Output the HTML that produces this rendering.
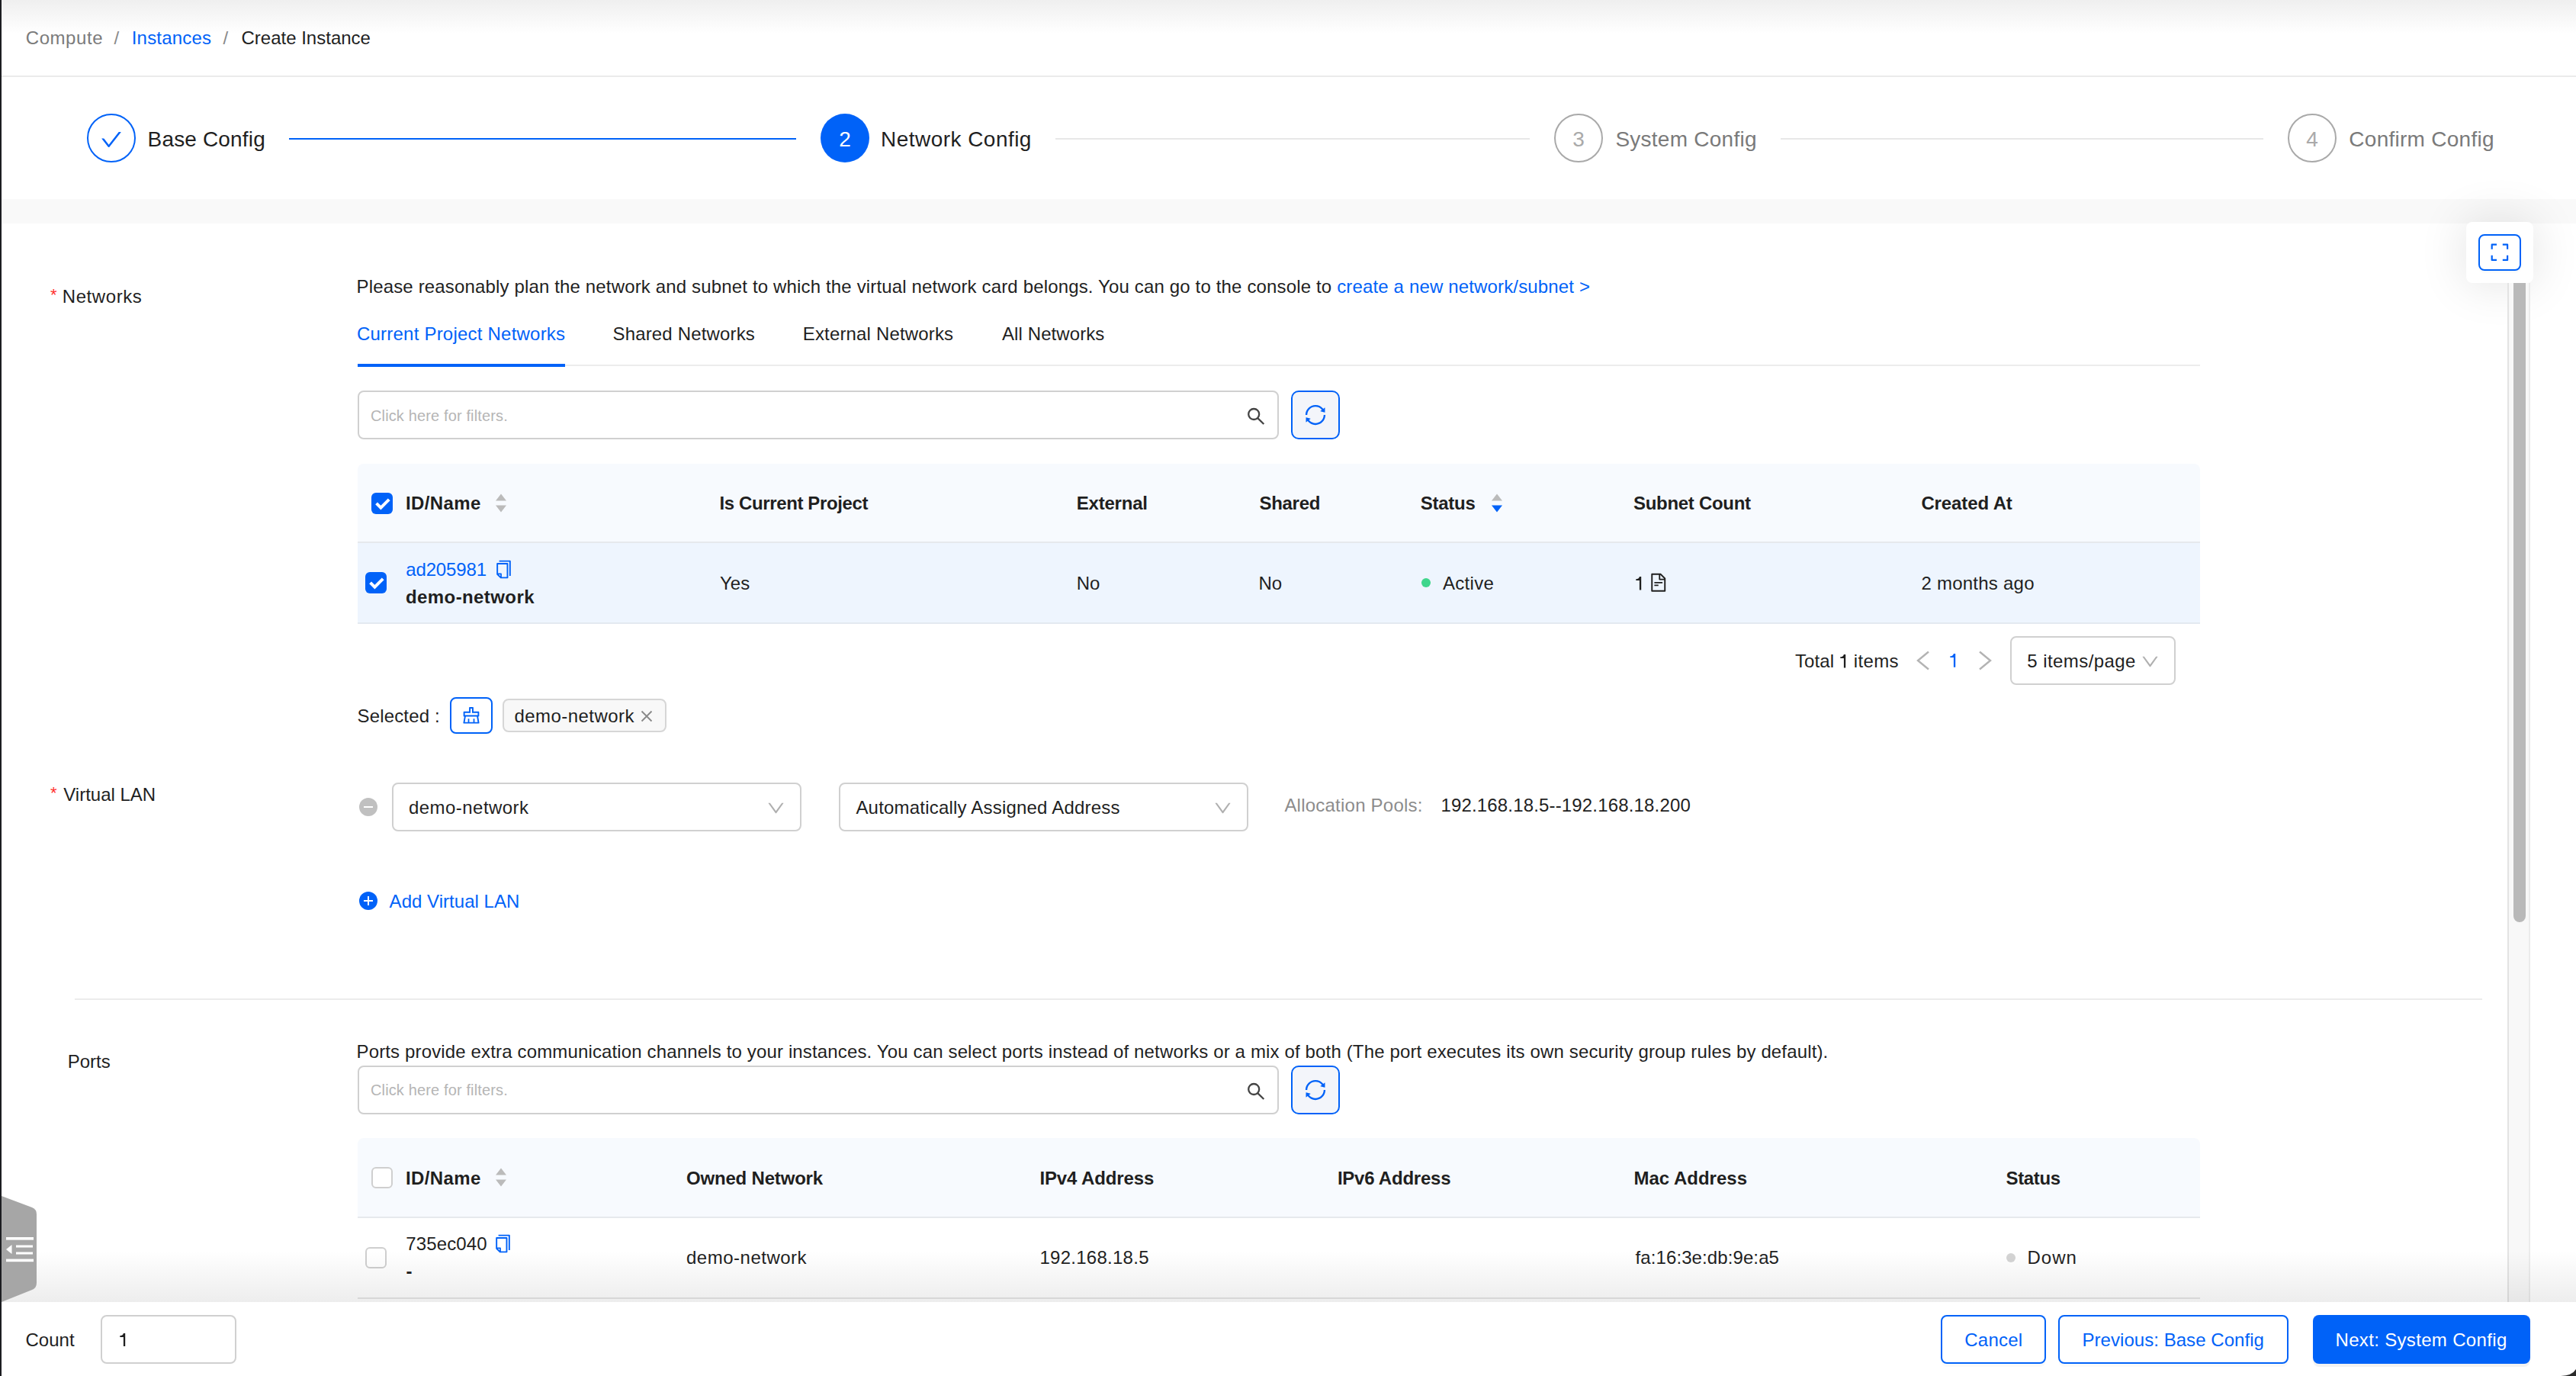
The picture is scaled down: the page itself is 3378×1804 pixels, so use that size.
<!DOCTYPE html>
<html><head><meta charset="utf-8">
<style>
html,body{margin:0;padding:0;width:3378px;height:1804px;overflow:hidden;background:#fff}
body{position:relative;font-family:"Liberation Sans",sans-serif;}
.t{position:absolute;line-height:1;white-space:nowrap;font-family:"Liberation Sans",sans-serif}
.a{position:absolute;box-sizing:border-box}
svg{position:absolute;overflow:visible}
</style></head><body>
<!-- top gradient -->
<div class="a" style="left:0;top:0;width:3378px;height:44px;background:linear-gradient(#efefef,#fff)"></div>
<!-- breadcrumb divider -->
<div class="a" style="left:0;top:99px;width:3378px;height:2px;background:#ebebeb"></div>
<!-- gray band -->
<div class="a" style="left:0;top:261px;width:3378px;height:32px;background:#f9f9f9"></div>

<!-- steps -->
<div class="a" style="left:114px;top:149px;width:64px;height:64px;border:2px solid #0062f8;border-radius:50%"></div>
<svg style="left:129.75px;top:167px" width="32" height="32" viewBox="0 0 1024 1024"><path fill="#0062f8" d="M912 190h-69.9c-9.8 0-19.1 4.5-25.1 12.2L404.7 724.5 207 474a32 32 0 00-25.1-12.2H112c-6.7 0-10.4 7.7-6.3 12.9l273.9 347c12.8 16.2 37.4 16.2 50.3 0l488.4-618.9c4.1-5.1.4-12.8-6.3-12.8z"/></svg>
<div class="a" style="left:379px;top:181px;width:665px;height:2px;background:#0062f8"></div>
<div class="a" style="left:1076px;top:149px;width:64px;height:64px;background:#0062f8;border-radius:50%;color:#fff;font-size:28px;line-height:68px;text-align:center">2</div>
<div class="a" style="left:1384px;top:181px;width:622px;height:2px;background:#e8e8e8"></div>
<div class="a" style="left:2038px;top:149px;width:64px;height:64px;border:2px solid #a9a9a9;border-radius:50%;color:#aaaaaa;font-size:28px;line-height:64px;text-align:center">3</div>
<div class="a" style="left:2335px;top:181px;width:633px;height:2px;background:#e8e8e8"></div>
<div class="a" style="left:3000px;top:149px;width:64px;height:64px;border:2px solid #a9a9a9;border-radius:50%;color:#aaaaaa;font-size:28px;line-height:64px;text-align:center">4</div>

<!-- fullscreen button -->
<div class="a" style="left:3234px;top:291px;width:88px;height:80px;background:#fff;border-radius:8px;box-shadow:0 0 64px rgba(0,0,0,0.12)"></div>
<div class="a" style="left:3250px;top:307px;width:56px;height:48px;border:2px solid #0062f8;border-radius:8px;box-shadow:0 3px 2px rgba(0,0,0,0.02)"></div>
<svg style="left:3266px;top:319px" width="24" height="24" viewBox="0 0 24 24"><path d="M1.7 7.8V1.7H8M15.8 1.7H22.1V7.8M22.1 15.8V21.9H15.8M8 21.9H1.7V15.8" fill="none" stroke="#0062f8" stroke-width="2.2" stroke-linecap="butt" stroke-linejoin="round"/></svg>

<!-- scrollbar -->
<div class="a" style="left:3288px;top:371px;width:30px;height:1336px;background:#f8f8f8;border-left:2px solid #e3e3e3;border-right:2px solid #ebebeb"></div>
<div class="a" style="left:3296px;top:371px;width:16px;height:838px;background:#b9b9b9;border-radius:0 0 8px 8px"></div>

<!-- required asterisks -->
<div class="t" style="left:66px;top:376px;font-size:22px;color:#ff2e2e">*</div>
<div class="t" style="left:66px;top:1029px;font-size:22px;color:#ff2e2e">*</div>

<!-- tabs -->
<div class="a" style="left:469px;top:478px;width:2416px;height:2px;background:#ececec"></div>
<div class="a" style="left:469px;top:477px;width:272px;height:4px;background:#0062f8"></div>

<!-- search 1 -->
<div class="a" style="left:469px;top:512px;width:1208px;height:64px;border:2px solid #d0d0d0;border-radius:8px;background:#fff"></div>
<svg style="left:1632px;top:531px" width="28" height="28" viewBox="0 0 28 28"><circle cx="12.2" cy="12" r="7" fill="none" stroke="#444" stroke-width="2.3"/><line x1="17.2" y1="17.2" x2="25.3" y2="25" stroke="#444" stroke-width="2.3"/></svg>
<div class="a" style="left:1693px;top:512px;width:64px;height:64px;border:2px solid #0062f8;border-radius:10px;background:#f3f5fa"></div>
<svg style="left:1708.6px;top:527.8px" width="32" height="32" viewBox="0 0 1024 1024"><path fill="#0062f8" d="M168 504.2c1-43.7 10-86.1 26.9-126 17.3-41 42.1-77.7 73.7-109.4S337 212.3 378 195c42.4-17.9 87.4-27 133.9-27s91.5 9.1 133.8 27A341.5 341.5 0 01755 268.8c9.900 9.9 19.2 20.4 27.8 31.4l-60.2 47a8 8 0 003 14.1l175.7 43c5 1.2 9.9-2.6 9.9-7.7l.8-180.9c0-6.7-7.7-10.5-12.9-6.3l-56.4 44.1C765.8 155.1 646.2 92 511.8 92 282.7 92 96.3 275.6 92 503.8a8 8 0 008 8.2h60c4.4 0 7.9-3.5 8-7.8zm756 7.8h-60c-4.4 0-7.9 3.5-8 7.8-1 43.7-10 86.1-26.9 126-17.3 41-42.1 77.8-73.7 109.4A342.45 342.45 0 01512.1 856a342.24 342.24 0 01-243.2-100.8c-9.9-9.9-19.2-20.4-27.8-31.4l60.2-47a8 8 0 00-3-14.1l-175.7-43c-5-1.2-9.9 2.6-9.9 7.7l-.7 181c0 6.7 7.7 10.5 12.9 6.3l56.4-44.1C258.2 868.9 377.8 932 512.2 932c229.2 0 415.5-183.7 419.8-411.8a8 8 0 00-8-8.2z"/></svg>

<!-- table 1 -->
<div class="a" style="left:469px;top:608px;width:2416px;height:102px;background:#f7fafe;border-radius:8px 8px 0 0"></div>
<div class="a" style="left:469px;top:710px;width:2416px;height:2px;background:#e6e9ed"></div>
<div class="a" style="left:469px;top:712px;width:2416px;height:104px;background:#eef5fe"></div>
<div class="a" style="left:469px;top:816px;width:2416px;height:2px;background:#e3e9f0"></div>
<!-- header checkbox -->
<div class="a" style="left:487px;top:646px;width:28px;height:28px;background:#0062f8;border-radius:6px"></div>
<svg style="left:487px;top:646px" width="28" height="28" viewBox="0 0 28 28"><polyline points="6.6,13.8 12.4,19.6 23.2,8.8" fill="none" stroke="#fff" stroke-width="4"/></svg>
<!-- sort icon -->
<svg style="left:649px;top:647px" width="16" height="25" viewBox="0 0 16 25"><path d="M8 0.5L15 9.5H1z M1 15.5H15L8 24.5z" fill="#bbbbbb"/></svg>
<svg style="left:1954.5px;top:647px" width="16" height="25" viewBox="0 0 16 25"><path d="M8 0.5L15 9.5H1z" fill="#bbbbbb"/><path d="M1 15.5H15L8 24.5z" fill="#0062f8"/></svg>
<!-- row checkbox -->
<div class="a" style="left:479px;top:750px;width:28px;height:28px;background:#0062f8;border-radius:6px"></div>
<svg style="left:479px;top:750px" width="28" height="28" viewBox="0 0 28 28"><polyline points="6.6,13.8 12.4,19.6 23.2,8.8" fill="none" stroke="#fff" stroke-width="4"/></svg>
<!-- copy icon -->
<svg style="left:646.8px;top:732.6px" width="27" height="27" viewBox="0 0 1024 1024"><path fill="#0062f8" d="M832 64H296c-4.4 0-8 3.600-8 8v56c0 4.4 3.6 8 8 8h496v688c0 4.4 3.6 8 8 8h56c4.4 0 8-3.6 8-8V96c0-17.7-14.3-32-32-32zM704 192H192c-17.7 0-32 14.3-32 32v530.7c0 8.5 3.4 16.6 9.4 22.6l173.3 173.3c2.2 2.2 4.7 4 7.4 5.5v1.9h4.2c3.5 1.3 7.2 2 11 2H704c17.7 0 32-14.3 32-32V224c0-17.7-14.3-32-32-32zM350 856.2L263.9 770H350v86.2zM664 888H414V746c0-22.1-17.9-40-40-40H232V264h432v624z"/></svg>
<!-- status dot -->
<div class="a" style="left:1864px;top:758px;width:12px;height:12px;background:#3fd68c;border-radius:50%"></div>
<!-- doc icon -->
<svg style="left:2160.5px;top:750.3px" width="27.5" height="27.5" viewBox="0 0 1024 1024"><path fill="#1f1f1f" d="M854.6 288.6L639.4 73.4c-6-6-14.1-9.4-22.6-9.4H192c-17.7 0-32 14.3-32 32v832c0 17.7 14.3 32 32 32h640c17.7 0 32-14.3 32-32V311.3c0-8.5-3.4-16.7-9.4-22.7zM790.2 326H602V137.8L790.2 326zm1.8 562H232V136h302v216a42 42 0 0042 42h216v494zM504 618H320c-4.4 0-8 3.6-8 8v48c0 4.4 3.6 8 8 8h184c4.4 0 8-3.6 8-8v-48c0-4.4-3.6-8-8-8zM312 490v48c0 4.4 3.6 8 8 8h384c4.4 0 8-3.6 8-8v-48c0-4.4-3.6-8-8-8H320c-4.4 0-8 3.6-8 8z"/></svg>

<!-- pagination -->
<svg style="left:2512px;top:853px" width="20" height="26" viewBox="0 0 20 26"><polyline points="17,1.5 3,13 17,24.5" fill="none" stroke="#b3b3b3" stroke-width="2.4"/></svg>
<svg style="left:2593px;top:853px" width="20" height="26" viewBox="0 0 20 26"><polyline points="3,1.5 17,13 3,24.5" fill="none" stroke="#b3b3b3" stroke-width="2.4"/></svg>
<div class="a" style="left:2636px;top:834px;width:217px;height:64px;border:2px solid #d0d0d0;border-radius:8px"></div>
<svg style="left:2805.5px;top:854.3px" width="27" height="27" viewBox="0 0 1024 1024"><path fill="#b0b0b0" d="M884 256h-75c-5.1 0-9.9 2.5-12.9 6.6L512 654.2 227.9 262.6c-3-4.1-7.8-6.6-12.9-6.6h-75c-6.5 0-10.3 7.4-6.5 12.7l352.6 486.1c12.8 17.6 39 17.6 51.7 0l352.6-486.1c3.900-5.3.1-12.700-6.4-12.700z"/></svg>

<!-- selected -->
<div class="a" style="left:590px;top:914px;width:56px;height:48px;border:2px solid #0062f8;border-radius:8px;background:#fff;box-shadow:0 2px 0 rgba(0,0,0,0.02)"></div>
<svg style="left:604px;top:924px" width="28" height="28" viewBox="0 0 1024 1024"><path fill="#0062f8" d="M899.1 869.6l-53-305.6H864c14.4 0 26-11.6 26-26V346c0-14.4-11.6-26-26-26H618V138c0-14.4-11.6-26-26-26H432c-14.4 0-26 11.6-26 26v182H160c-14.4 0-26 11.6-26 26v192c0 14.4 11.6 26 26 26h17.9l-53 305.6a25.950 25.950 0 0025.600 30.400h723c1.5 0 3-.1 4.4-.4a25.880 25.880 0 0021.200-30zM204 390h272V182h72v208h272v104H204V390zm468 440V674c0-4.4-3.6-8-8-8h-48c-4.4 0-8 3.6-8 8v156H416V674c0-4.4-3.6-8-8-8h-48c-4.4 0-8 3.6-8 8v156H202.8l45.1-260H776l45.1 260H672z"/></svg>
<div class="a" style="left:659px;top:916px;width:215px;height:44px;border:2px solid #d6d6d6;border-radius:8px;background:#f8f8f8"></div>
<svg style="left:840px;top:931px" width="16" height="16" viewBox="0 0 16 16"><path d="M1.5 1.5L14.5 14.5M14.5 1.5L1.5 14.5" stroke="#888" stroke-width="1.8" fill="none"/></svg>

<!-- virtual lan -->
<div class="a" style="left:471px;top:1046px;width:24px;height:24px;background:#c0c0c0;border-radius:50%"></div>
<div class="a" style="left:477px;top:1057px;width:12px;height:2px;background:#fff"></div>
<div class="a" style="left:514px;top:1026px;width:537px;height:64px;border:2px solid #d0d0d0;border-radius:8px"></div>
<svg style="left:1003.5px;top:1046.05px" width="27" height="27" viewBox="0 0 1024 1024"><path fill="#b0b0b0" d="M884 256h-75c-5.1 0-9.9 2.5-12.9 6.6L512 654.2 227.9 262.6c-3-4.1-7.8-6.6-12.9-6.6h-75c-6.5 0-10.3 7.4-6.5 12.7l352.6 486.1c12.8 17.6 39 17.6 51.7 0l352.6-486.1c3.900-5.3.1-12.700-6.4-12.700z"/></svg>
<div class="a" style="left:1100px;top:1026px;width:537px;height:64px;border:2px solid #d0d0d0;border-radius:8px"></div>
<svg style="left:1589.9px;top:1046.05px" width="27" height="27" viewBox="0 0 1024 1024"><path fill="#b0b0b0" d="M884 256h-75c-5.1 0-9.9 2.5-12.9 6.6L512 654.2 227.9 262.6c-3-4.1-7.8-6.6-12.9-6.6h-75c-6.5 0-10.3 7.4-6.5 12.7l352.6 486.1c12.8 17.6 39 17.6 51.7 0l352.6-486.1c3.900-5.3.1-12.700-6.4-12.700z"/></svg>
<div class="a" style="left:471px;top:1169px;width:24px;height:24px;background:#0062f8;border-radius:50%"></div>
<div class="a" style="left:477px;top:1180px;width:12px;height:2px;background:#fff"></div>
<div class="a" style="left:482px;top:1175px;width:2px;height:12px;background:#fff"></div>

<!-- divider -->
<div class="a" style="left:98px;top:1309px;width:3157px;height:2px;background:#ececec"></div>

<!-- search 2 -->
<div class="a" style="left:469px;top:1397px;width:1208px;height:64px;border:2px solid #d0d0d0;border-radius:8px;background:#fff"></div>
<svg style="left:1632px;top:1416px" width="28" height="28" viewBox="0 0 28 28"><circle cx="12.2" cy="12" r="7" fill="none" stroke="#444" stroke-width="2.3"/><line x1="17.2" y1="17.2" x2="25.3" y2="25" stroke="#444" stroke-width="2.3"/></svg>
<div class="a" style="left:1693px;top:1397px;width:64px;height:64px;border:2px solid #0062f8;border-radius:10px;background:#f3f5fa"></div>
<svg style="left:1708.6px;top:1412.8px" width="32" height="32" viewBox="0 0 1024 1024"><path fill="#0062f8" d="M168 504.2c1-43.7 10-86.1 26.9-126 17.3-41 42.1-77.7 73.7-109.4S337 212.3 378 195c42.4-17.9 87.4-27 133.9-27s91.5 9.1 133.8 27A341.5 341.5 0 01755 268.8c9.9 9.9 19.2 20.4 27.8 31.4l-60.2 47a8 8 0 003 14.1l175.7 43c5 1.2 9.9-2.6 9.9-7.7l.8-180.9c0-6.7-7.7-10.5-12.9-6.3l-56.4 44.1C765.8 155.1 646.2 92 511.8 92 282.7 92 96.3 275.6 92 503.8a8 8 0 008 8.2h60c4.4 0 7.9-3.5 8-7.8zm756 7.8h-60c-4.4 0-7.9 3.5-8 7.8-1 43.7-10 86.1-26.9 126-17.3 41-42.1 77.8-73.7 109.4A342.45 342.45 0 01512.1 856a342.24 342.24 0 01-243.2-100.8c-9.9-9.9-19.2-20.4-27.8-31.4l60.2-47a8 8 0 00-3-14.1l-175.7-43c-5-1.2-9.9 2.6-9.9 7.7l-.7 181c0 6.7 7.7 10.5 12.9 6.3l56.4-44.1C258.2 868.9 377.8 932 512.2 932c229.2 0 415.5-183.7 419.8-411.8a8 8 0 00-8-8.2z"/></svg>

<!-- table 2 -->
<div class="a" style="left:469px;top:1492px;width:2416px;height:103px;background:#f7fafe;border-radius:8px 8px 0 0"></div>
<div class="a" style="left:469px;top:1595px;width:2416px;height:2px;background:#e6e9ed"></div>
<div class="a" style="left:469px;top:1701px;width:2416px;height:2px;background:#e6e6e6"></div>
<div class="a" style="left:487px;top:1530px;width:28px;height:28px;border:2px solid #cfcfcf;border-radius:6px;background:#fff"></div>
<svg style="left:649px;top:1531px" width="16" height="25" viewBox="0 0 16 25"><path d="M8 0.5L15 9.5H1z M1 15.5H15L8 24.5z" fill="#bbbbbb"/></svg>
<div class="a" style="left:479px;top:1635px;width:28px;height:28px;border:2px solid #cfcfcf;border-radius:6px;background:#fff"></div>
<svg style="left:645.6px;top:1616.7px" width="27" height="27" viewBox="0 0 1024 1024"><path fill="#0062f8" d="M832 64H296c-4.4 0-8 3.6-8 8v56c0 4.4 3.6 8 8 8h496v688c0 4.4 3.6 8 8 8h56c4.4 0 8-3.6 8-8V96c0-17.7-14.3-32-32-32zM704 192H192c-17.7 0-32 14.3-32 32v530.7c0 8.5 3.4 16.6 9.4 22.6l173.3 173.3c2.2 2.2 4.7 4 7.4 5.5v1.9h4.2c3.5 1.3 7.2 2 11 2H704c17.7 0 32-14.3 32-32V224c0-17.7-14.3-32-32-32zM350 856.2L263.9 770H350v86.2zM664 888H414V746c0-22.1-17.9-40-40-40H232V264h432v624z"/></svg>
<div class="a" style="left:2631px;top:1643px;width:12px;height:12px;background:#d4d4d4;border-radius:50%"></div>

<!-- footer shadow -->
<div class="a" style="left:0;top:1640px;width:3378px;height:67px;background:linear-gradient(rgba(0,0,0,0),rgba(0,0,0,0.07))"></div>
<div class="a" style="left:0;top:1707px;width:3378px;height:97px;background:#fff"></div>
<div class="a" style="left:132px;top:1724px;width:178px;height:64px;border:2px solid #d0d0d0;border-radius:8px"></div>
<div class="a" style="left:2545px;top:1724px;width:138px;height:64px;border:2px solid #0062f8;border-radius:8px;box-shadow:0 4px 0 rgba(0,0,0,0.02)"></div>
<div class="a" style="left:2699px;top:1724px;width:302px;height:64px;border:2px solid #0062f8;border-radius:8px;box-shadow:0 4px 0 rgba(0,0,0,0.02)"></div>
<div class="a" style="left:3033px;top:1724px;width:285px;height:64px;background:#0062f8;border-radius:8px;box-shadow:0 4px 0 rgba(0,0,0,0.05)"></div>

<!-- left collapse tab -->
<svg style="left:0;top:1566px" width="50" height="143" viewBox="0 0 50 143"><path d="M2 2L42 17Q48 19.5 48 26V116Q48 122.5 42 125L2 141z" fill="#a6a6a6"/><rect x="8" y="56" width="36" height="3.6" fill="#fff"/><rect x="8" y="84.6" width="36" height="3.6" fill="#fff"/><path d="M8 72L15.5 66V78z" fill="#fff"/><rect x="21" y="66.5" width="22" height="3" fill="#fff"/><rect x="21" y="75.5" width="22" height="3" fill="#fff"/></svg>

<!-- left dark bar -->
<div class="a" style="left:0;top:0;width:2px;height:1804px;background:#1c1d21"></div>
<!-- bottom right window corner -->
<svg style="left:3358px;top:1795px" width="20" height="9" viewBox="0 0 20 9"><path d="M0 9Q15 8.5 20 0V9z" fill="#2a2a2a"/></svg>

<!-- helvetica-style 1s -->
<svg style="left:2144.9px;top:755.5px" width="8" height="17.4" viewBox="0 0 8 17.4" preserveAspectRatio="none"><path d="M4.9 0H7.2V17.4H4.9V5H0.3V3.3C2.6 3.3 4.4 2.4 4.9 0z" fill="#1f1f1f"/></svg>
<svg style="left:2557.4px;top:857.3px" width="8" height="17.7" viewBox="0 0 8 17.4" preserveAspectRatio="none"><path d="M4.9 0H7.2V17.4H4.9V5H0.3V3.3C2.6 3.3 4.4 2.4 4.9 0z" fill="#0062f8"/></svg>
<svg style="left:157px;top:1747.6px" width="8" height="17.1" viewBox="0 0 8 17.4" preserveAspectRatio="none"><path d="M4.9 0H7.2V17.4H4.9V5H0.3V3.3C2.6 3.3 4.4 2.4 4.9 0z" fill="#1f1f1f"/></svg>
<svg style="left:2413.2px;top:857.5px" width="8" height="17.5" viewBox="0 0 8 17.4" preserveAspectRatio="none"><path d="M4.9 0H7.2V17.4H4.9V5H0.3V3.3C2.6 3.3 4.4 2.4 4.9 0z" fill="#1f1f1f"/></svg>

<div class='t' style='left:33.75px;top:38.00px;font-size:24px;letter-spacing:0.567px;color:#7b7b7b'>Compute</div>
<div class='t' style='left:149.40px;top:38.00px;font-size:24px;color:#8a8a8a'>/</div>
<div class='t' style='left:172.75px;top:38.00px;font-size:24px;letter-spacing:0.188px;color:#0062f8'>Instances</div>
<div class='t' style='left:292.50px;top:38.00px;font-size:24px;color:#8a8a8a'>/</div>
<div class='t' style='left:316.50px;top:38.00px;font-size:24px;color:#1f1f1f'>Create Instance</div>
<div class='t' style='left:193.60px;top:169.00px;font-size:28px;letter-spacing:0.160px;color:#1f1f1f'>Base Config</div>
<div class='t' style='left:1155.00px;top:169.00px;font-size:28px;letter-spacing:0.462px;color:#1f1f1f'>Network Config</div>
<div class='t' style='left:2118.40px;top:169.00px;font-size:28px;letter-spacing:0.250px;color:#7a7a7a'>System Config</div>
<div class='t' style='left:3080.30px;top:169.00px;font-size:28px;letter-spacing:0.269px;color:#7a7a7a'>Confirm Config</div>
<div class='t' style='left:81.75px;top:377.00px;font-size:24px;letter-spacing:0.571px;color:#1f1f1f'>Networks</div>
<div class='t' style='left:467.50px;top:364.00px;font-size:24px;letter-spacing:0.154px;color:#1f1f1f'>Please reasonably plan the network and subnet to which the virtual network card belongs. You can go to the console to <span style='color:#0062f8'>create a new network/subnet &gt;</span></div>
<div class='t' style='left:468.00px;top:426.00px;font-size:24px;letter-spacing:0.217px;color:#0062f8'>Current Project Networks</div>
<div class='t' style='left:803.50px;top:426.00px;font-size:24px;letter-spacing:0.161px;color:#1f1f1f'>Shared Networks</div>
<div class='t' style='left:1052.75px;top:426.00px;font-size:24px;letter-spacing:0.162px;color:#1f1f1f'>External Networks</div>
<div class='t' style='left:1314.00px;top:426.00px;font-size:24px;letter-spacing:0.091px;color:#1f1f1f'>All Networks</div>
<div class='t' style='left:486.00px;top:535.00px;font-size:20px;letter-spacing:0.136px;color:#b5b5b5'>Click here for filters.</div>
<div class='t' style='left:532.00px;top:648.00px;font-size:24px;font-weight:700;letter-spacing:0.367px;color:#1f1f1f'>ID/Name</div>
<div class='t' style='left:943.50px;top:648.00px;font-size:24px;font-weight:700;letter-spacing:-0.382px;color:#1f1f1f'>Is Current Project</div>
<div class='t' style='left:1411.75px;top:648.00px;font-size:24px;font-weight:700;letter-spacing:-0.214px;color:#1f1f1f'>External</div>
<div class='t' style='left:1651.50px;top:648.00px;font-size:24px;font-weight:700;letter-spacing:-0.300px;color:#1f1f1f'>Shared</div>
<div class='t' style='left:1862.75px;top:648.00px;font-size:24px;font-weight:700;letter-spacing:-0.250px;color:#1f1f1f'>Status</div>
<div class='t' style='left:2142.00px;top:648.00px;font-size:24px;font-weight:700;letter-spacing:-0.300px;color:#1f1f1f'>Subnet Count</div>
<div class='t' style='left:2519.40px;top:648.00px;font-size:24px;font-weight:700;letter-spacing:-0.111px;color:#1f1f1f'>Created At</div>
<div class='t' style='left:532.25px;top:735.00px;font-size:24px;letter-spacing:-0.143px;color:#0062f8'>ad205981</div>
<div class='t' style='left:532.00px;top:771.00px;font-size:24px;font-weight:700;letter-spacing:0.409px;color:#1f1f1f'>demo-network</div>
<div class='t' style='left:944.00px;top:752.50px;font-size:24px;color:#1f1f1f'>Yes</div>
<div class='t' style='left:1411.75px;top:752.50px;font-size:24px;color:#1f1f1f'>No</div>
<div class='t' style='left:1650.50px;top:752.50px;font-size:24px;color:#1f1f1f'>No</div>
<div class='t' style='left:1892.00px;top:752.50px;font-size:24px;letter-spacing:0.300px;color:#1f1f1f'>Active</div>
<div class='t' style='left:2519.40px;top:752.50px;font-size:24px;letter-spacing:0.245px;color:#1f1f1f'>2 months ago</div>
<div class='t' style='left:2354.00px;top:855.00px;font-size:24px;letter-spacing:0.075px;color:#1f1f1f'>Total</div>
<div class='t' style='left:2430.70px;top:855.00px;font-size:24px;letter-spacing:0.375px;color:#1f1f1f'>items</div>
<div class='t' style='left:2658.30px;top:855.00px;font-size:24px;letter-spacing:0.427px;color:#1f1f1f'>5 items/page</div>
<div class='t' style='left:468.50px;top:927.00px;font-size:24px;letter-spacing:0.167px;color:#1f1f1f'>Selected :</div>
<div class='t' style='left:674.40px;top:927.00px;font-size:24px;letter-spacing:0.455px;color:#1f1f1f'>demo-network</div>
<div class='t' style='left:83.25px;top:1030.00px;font-size:24px;color:#1f1f1f'>Virtual LAN</div>
<div class='t' style='left:536.00px;top:1047.00px;font-size:24px;letter-spacing:0.455px;color:#1f1f1f'>demo-network</div>
<div class='t' style='left:1122.40px;top:1047.00px;font-size:24px;letter-spacing:0.203px;color:#1f1f1f'>Automatically Assigned Address</div>
<div class='t' style='left:1684.40px;top:1044.00px;font-size:24px;letter-spacing:0.225px;color:#8c8c8c'>Allocation Pools:</div>
<div class='t' style='left:1889.50px;top:1044.00px;font-size:24px;letter-spacing:0.159px;color:#1f1f1f'>192.168.18.5--192.168.18.200</div>
<div class='t' style='left:510.60px;top:1170.00px;font-size:24px;letter-spacing:0.029px;color:#0062f8'>Add Virtual LAN</div>
<div class='t' style='left:88.75px;top:1380.00px;font-size:24px;color:#1f1f1f'>Ports</div>
<div class='t' style='left:467.50px;top:1367.00px;font-size:24px;letter-spacing:0.146px;color:#1f1f1f'>Ports provide extra communication channels to your instances. You can select ports instead of networks or a mix of both (The port executes its own security group rules by default).</div>
<div class='t' style='left:486.00px;top:1419.00px;font-size:20px;letter-spacing:0.136px;color:#b5b5b5'>Click here for filters.</div>
<div class='t' style='left:532.00px;top:1533.00px;font-size:24px;font-weight:700;letter-spacing:0.367px;color:#1f1f1f'>ID/Name</div>
<div class='t' style='left:900.00px;top:1533.00px;font-size:24px;font-weight:700;letter-spacing:-0.188px;color:#1f1f1f'>Owned Network</div>
<div class='t' style='left:1363.40px;top:1533.00px;font-size:24px;font-weight:700;letter-spacing:-0.118px;color:#1f1f1f'>IPv4 Address</div>
<div class='t' style='left:1753.90px;top:1533.00px;font-size:24px;font-weight:700;letter-spacing:-0.236px;color:#1f1f1f'>IPv6 Address</div>
<div class='t' style='left:2142.50px;top:1533.00px;font-size:24px;font-weight:700;letter-spacing:0.000px;color:#1f1f1f'>Mac Address</div>
<div class='t' style='left:2630.50px;top:1533.00px;font-size:24px;font-weight:700;letter-spacing:-0.360px;color:#1f1f1f'>Status</div>
<div class='t' style='left:532.25px;top:1619.00px;font-size:24px;letter-spacing:0.143px;color:#1f1f1f'>735ec040</div>
<div class='t' style='left:532.50px;top:1655.00px;font-size:24px;font-weight:700;color:#1f1f1f'>-</div>
<div class='t' style='left:900.00px;top:1637.00px;font-size:24px;letter-spacing:0.500px;color:#1f1f1f'>demo-network</div>
<div class='t' style='left:1363.40px;top:1637.00px;font-size:24px;letter-spacing:0.273px;color:#1f1f1f'>192.168.18.5</div>
<div class='t' style='left:2144.50px;top:1637.00px;font-size:24px;letter-spacing:0.100px;color:#1f1f1f'>fa:16:3e:db:9e:a5</div>
<div class='t' style='left:2658.50px;top:1637.00px;font-size:24px;letter-spacing:1.000px;color:#1f1f1f'>Down</div>
<div class='t' style='left:33.50px;top:1745.00px;font-size:24px;color:#1f1f1f'>Count</div>
<div class='t' style='left:2576.30px;top:1745.00px;font-size:24px;letter-spacing:0.220px;color:#0062f8'>Cancel</div>
<div class='t' style='left:2730.50px;top:1745.00px;font-size:24px;letter-spacing:0.045px;color:#0062f8'>Previous: Base Config</div>
<div class='t' style='left:3062.50px;top:1745.00px;font-size:24px;letter-spacing:0.333px;color:#fff'>Next: System Config</div>
</body></html>
